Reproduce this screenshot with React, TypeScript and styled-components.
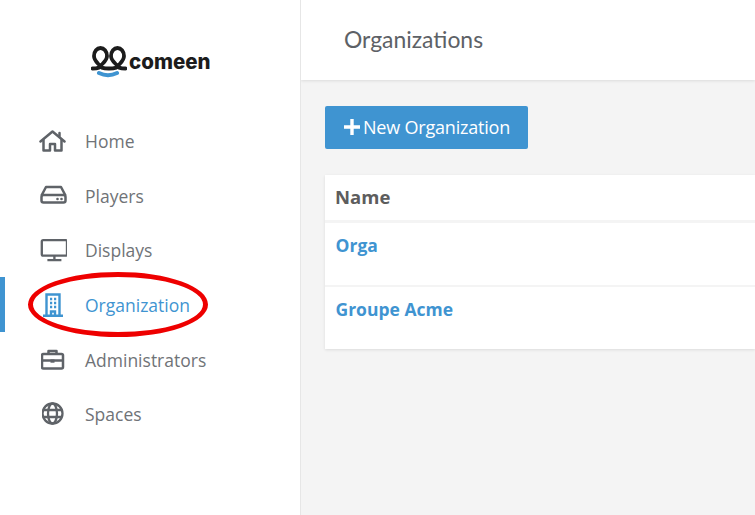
import React from 'react'
import styled, { createGlobalStyle } from 'styled-components'

const GlobalStyle = createGlobalStyle`
  html, body {
    margin: 0;
    padding: 0;
    height: 100%;
    overflow: hidden;
    background: #f4f4f4;
    font-family: 'Open Sans', sans-serif;
  }
`

const HomeIcon = () => (
  <svg width="28" height="22" viewBox="0 0 28 22" fill="none" stroke="currentColor" strokeWidth="2.5" strokeLinejoin="round" strokeLinecap="round">
    <path d="M1.5 11.5 13.5 1.5 25.5 11.5" />
    <path d="M20.5 3v3" />
    <path d="M4.5 10v10.5h6.5v-6.5h5v6.5h6.5V10" />
  </svg>
)

const PlayerIcon = () => (
  <svg width="27" height="20" viewBox="0 0 27 20" fill="none" stroke="currentColor" strokeWidth="2.5" strokeLinejoin="round">
    <path d="M1.5 10.5 6 2h15l4.5 8.5" />
    <rect x="1.5" y="10" width="24" height="7.5" rx="2" />
    <circle cx="17.5" cy="14" r="1.3" fill="currentColor" stroke="none" />
    <circle cx="21.5" cy="14" r="1.3" fill="currentColor" stroke="none" />
  </svg>
)

const DisplayIcon = () => (
  <svg width="30" height="24" viewBox="-1.5 0 30 24" fill="none" stroke="currentColor" strokeWidth="2.5" strokeLinejoin="round">
    <rect x="1.5" y="1.5" width="27" height="16.5" rx="1.5" />
    <path d="M15 18v4.8M7.5 22.8h15" />
  </svg>
)

const BuildingIcon = () => (
  <svg width="22" height="24" viewBox="0 0 22 24" fill="none" stroke="currentColor" strokeWidth="2.4">
    <path d="M1 22.8h20M4.5 23V1.5h13V23" />
    <path d="M8 6h2.2M12 6h2.2M8 10h2.2M12 10h2.2M8 14h2.2M12 14h2.2M9 23v-4.5h4V23" />
  </svg>
)

const BriefcaseIcon = () => (
  <svg width="24" height="21" viewBox="0.5 0 24 21" fill="none" stroke="currentColor" strokeWidth="2.5" strokeLinejoin="round">
    <rect x="1.5" y="5" width="21" height="14.5" rx="1.5" />
    <path d="M8 5V2h8v3M1.5 11.5h21" />
    <rect x="10" y="10.5" width="4" height="3.2" fill="currentColor" stroke="none" />
  </svg>
)

const GlobeIcon = () => (
  <svg width="23" height="23" viewBox="1 0 23 23" fill="none" stroke="currentColor" strokeWidth="2.3">
    <circle cx="11.5" cy="11.5" r="10" />
    <ellipse cx="11.5" cy="11.5" rx="4.5" ry="10" />
    <path d="M2 8h19M2 15h19" />
  </svg>
)

const PlusIcon = () => (
  <svg width="16" height="16" viewBox="0 0 16 16" fill="currentColor">
    <path d="M6.3 0h3.4v6.3H16v3.4H9.7V16H6.3V9.7H0V6.3h6.3z" />
  </svg>
)

const LogoMark = () => (
  <svg width="36" height="33" viewBox="0 0 36 33" fill="none" strokeLinecap="round">
    <path
      d="M1.5 22.5c5 0 7.5-1 7.5-2 0-2-6-5-6-10.5 0-4.5 3-8 6.5-8S16 5.5 16 10c0 5.5-6.5 8.5-6.5 10.5 0 1 3 2 8.5 2s8.5-1 8.5-2c0-2-6.5-5-6.5-10.5 0-4.5 3-8 6.5-8S33 5.5 33 10c0 5.5-6 8.5-6 10.5 0 1 2.5 2 7.5 2"
      stroke="#1c1c1c"
      strokeWidth="3.8"
    />
    <path d="M8 27c6 3 12 3 18 0" stroke="#3f94d1" strokeWidth="4" />
  </svg>
)

const navItems = [
  { label: 'Home', icon: <HomeIcon /> },
  { label: 'Players', icon: <PlayerIcon /> },
  { label: 'Displays', icon: <DisplayIcon /> },
  { label: 'Organization', icon: <BuildingIcon />, active: true },
  { label: 'Administrators', icon: <BriefcaseIcon /> },
  { label: 'Spaces', icon: <GlobeIcon /> },
]

const App: React.FC = () => {
  return (
    <>
      <GlobalStyle />
      <StyledPage>
        <StyledSidebar>
          <StyledLogo>
            <LogoMark />
            <StyledLogoText>comeen</StyledLogoText>
          </StyledLogo>
          <StyledNav>
            {navItems.map((item) => (
              <StyledNavItem key={item.label} $active={item.active}>
                <StyledNavIcon $active={item.active}>{item.icon}</StyledNavIcon>
                <StyledNavLabel>{item.label}</StyledNavLabel>
              </StyledNavItem>
            ))}
          </StyledNav>
          <StyledCircle />
        </StyledSidebar>
        <StyledMain>
          <StyledHeader>
            <StyledTitle>Organizations</StyledTitle>
          </StyledHeader>
          <StyledContent>
            <StyledButton>
              <PlusIcon />
              New Organization
            </StyledButton>
            <StyledTable>
              <StyledHeadRow>Name</StyledHeadRow>
              <StyledRow>Orga</StyledRow>
              <StyledRow>Groupe Acme</StyledRow>
            </StyledTable>
          </StyledContent>
        </StyledMain>
      </StyledPage>
    </>
  )
}

const StyledPage = styled.div`
  display: flex;
  width: 755px;
  height: 515px;
  overflow: hidden;
`

const StyledSidebar = styled.aside`
  position: relative;
  box-sizing: border-box;
  flex: 0 0 301px;
  height: 515px;
  background: #fff;
  border-right: 1px solid #e6e6e6;
`

const StyledLogo = styled.div`
  display: flex;
  align-items: flex-start;
  height: 113.6px;
  box-sizing: border-box;
  padding: 46px 0 0 91px;
`

const StyledLogoText = styled.span`
  margin: 2px 0 0 2px;
  font-family: 'Inter', sans-serif;
  font-size: 20.5px;
  font-weight: 800;
  line-height: 28px;
  color: #1c1c1c;
`

const StyledNav = styled.nav`
  display: flex;
  flex-direction: column;
`

const StyledNavItem = styled.div<{ $active?: boolean }>`
  display: flex;
  align-items: center;
  box-sizing: border-box;
  height: 54.6px;
  padding-left: 34px;
  font-size: 17.5px;
  color: ${(props) => (props.$active ? '#3f94d1' : '#707377')};
  border-left: 5px solid ${(props) => (props.$active ? '#3f94d1' : 'transparent')};
`

const StyledNavIcon = styled.span<{ $active?: boolean }>`
  display: flex;
  align-items: center;
  justify-content: center;
  flex: 0 0 28px;
  width: 28px;
  margin-right: 18px;
  color: ${(props) => (props.$active ? '#3f94d1' : '#5f6368')};
`

const StyledNavLabel = styled.span`
  padding-top: 0.5px;
`

const StyledCircle = styled.div`
  position: absolute;
  left: 28px;
  top: 272px;
  width: 180px;
  height: 65px;
  box-sizing: border-box;
  border: 5px solid #ee0000;
  border-radius: 50%;
`

const StyledMain = styled.main`
  flex: 1;
  min-width: 0;
  display: flex;
  flex-direction: column;
`

const StyledHeader = styled.header`
  display: flex;
  align-items: center;
  box-sizing: border-box;
  height: 80px;
  padding: 0 0 2px 43px;
  background: #fff;
  box-shadow: 0 1px 3px rgba(0, 0, 0, 0.1);
`

const StyledTitle = styled.h1`
  margin: 0;
  font-family: 'Lato', sans-serif;
  font-size: 22.9px;
  font-weight: 400;
  color: #5d6166;
`

const StyledContent = styled.div`
  padding: 26px 0 0 24px;
`

const StyledButton = styled.button`
  display: flex;
  align-items: center;
  gap: 3px;
  box-sizing: border-box;
  width: 203px;
  height: 43px;
  padding: 0 0 2px 19px;
  border: none;
  border-radius: 2px;
  background: #3f94d1;
  color: #fff;
  font-family: 'Open Sans', sans-serif;
  font-size: 18px;
  font-weight: 500;
  letter-spacing: -0.2px;
`

const StyledTable = styled.div`
  display: flex;
  flex-direction: column;
  gap: 2px;
  margin-top: 26px;
  background: #f4f4f4;
  box-shadow: 0 1px 3px rgba(0, 0, 0, 0.1);
`

const StyledHeadRow = styled.div`
  box-sizing: border-box;
  height: 45px;
  margin-bottom: 1px;
  padding: 9px 0 0 10px;
  background: #fff;
  font-size: 18.5px;
  font-weight: 700;
  color: #5d5d5d;
`

const StyledRow = styled.div`
  box-sizing: border-box;
  height: 62px;
  padding: 10px 0 0 10.5px;
  background: #fff;
  font-size: 17.5px;
  font-weight: 700;
  color: #3f94d1;
`

export default App
